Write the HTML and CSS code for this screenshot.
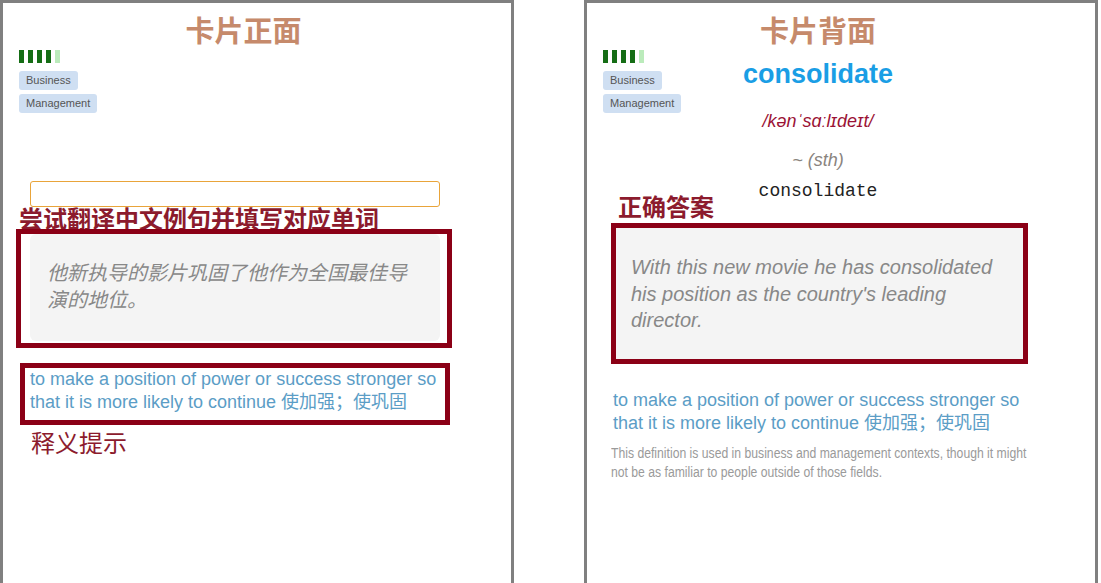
FILE: index.html
```html
<!DOCTYPE html>
<html lang="zh-CN">
<head>
<meta charset="utf-8">
<title>卡片</title>
<link rel="stylesheet" href="styles.css">
</head>
<body>
<div class="cards">
  <section class="card">
    <div class="head">
      <div class="main main-front">
        <h2 class="title">卡片正面</h2>
      </div>
      <div class="meta">
        <div class="bars"><span class="bar"></span><span class="bar"></span><span class="bar"></span><span class="bar"></span><span class="bar bar-off"></span></div>
        <span class="tag">Business</span>
        <span class="tag">Management</span>
      </div>
    </div>
    <input class="answer" type="text" aria-label="answer">
    <h3 class="mark mark-try">尝试翻译中文例句并填写对应单词</h3>
    <div class="hl hl-example">
      <p class="example example-zh">他新执导的影片巩固了他作为全国最佳导演的地位。</p>
    </div>
    <div class="hl hl-def">
      <p class="def">to make a position of power or success stronger so that it is more likely to continue 使加强；使巩固</p>
    </div>
    <div class="mark-hint">释义提示</div>
  </section>

  <section class="card">
    <div class="head">
      <div class="main main-back">
        <h2 class="title">卡片背面</h2>
        <div class="word">consolidate</div>
        <div class="phon">/kənˈsɑːlɪdeɪt/</div>
        <div class="usage">~ (sth)</div>
        <div class="mono">consolidate</div>
      </div>
      <div class="meta">
        <div class="bars"><span class="bar"></span><span class="bar"></span><span class="bar"></span><span class="bar"></span><span class="bar bar-off"></span></div>
        <span class="tag">Business</span>
        <span class="tag">Management</span>
      </div>
    </div>
    <h3 class="mark mark-answer">正确答案</h3>
    <div class="hl hl-answer">
      <p class="example example-en">With this new movie he has consolidated his position as the country's leading director.</p>
    </div>
    <p class="def def-back">to make a position of power or success stronger so that it is more likely to continue 使加强；使巩固</p>
    <p class="extra">This definition is used in business and management contexts, though it might not be as familiar to people outside of those fields.</p>
  </section>
</div>
</body>
</html>
```

FILE: styles.css
```css
html, body {
  margin: 0;
  padding: 0;
  background: #ffffff;
}

body {
  font-family: "Liberation Sans", "Noto Sans CJK SC", sans-serif;
  color: #333;
  overflow: hidden;
}

.cards {
  display: flex;
  gap: 70px;
  align-items: flex-start;
}

.card {
  box-sizing: border-box;
  width: 514px;
  min-height: 620px;
  border: 3px solid #808080;
  border-bottom: 0;
  padding: 0 16px;
}

.head {
  display: grid;
  align-items: start;
}

.head > * {
  grid-area: 1 / 1;
}

.main {
  justify-self: start;
  text-align: center;
}

.main-front { width: 449px; }
.main-back { width: 430px; }

.title {
  margin: 0;
  padding-top: 10px;
  font-family: "Noto Sans CJK SC", sans-serif;
  font-size: 29px;
  line-height: 32px;
  font-weight: 700;
  color: #c68a6b;
}

.meta {
  justify-self: start;
  margin-top: 47px;
  display: flex;
  flex-direction: column;
  align-items: flex-start;
  gap: 4px;
}

.bars {
  display: flex;
  gap: 4px;
  height: 13px;
  margin-bottom: 4px;
}

.bar {
  width: 5px;
  height: 13px;
  background: #156d15;
}

.bar-off {
  background: #bbebbb;
}

.tag {
  display: block;
  padding: 3px 7px;
  font-size: 11px;
  line-height: 13px;
  color: #555;
  background: #cfdff2;
  border-radius: 3px;
}

.word {
  margin-top: 13px;
  font-size: 27px;
  line-height: 32px;
  font-weight: 700;
  color: #1a9ee5;
}

.phon {
  margin-top: 20px;
  font-size: 18px;
  line-height: 22px;
  font-style: italic;
  color: #9b1235;
}

.usage {
  margin-top: 17px;
  font-size: 18px;
  line-height: 22px;
  font-style: italic;
  color: #8a847e;
}

.mono {
  margin-top: 9px;
  font-family: "Liberation Mono", monospace;
  font-size: 18px;
  line-height: 22px;
  color: #222;
}

.answer {
  display: block;
  box-sizing: border-box;
  width: 410px;
  height: 26px;
  margin: 68px 0 0 11px;
  padding: 0 6px;
  border: 1px solid #e9a43a;
  border-radius: 3px;
  background: #fff;
  outline: none;
}

.mark {
  margin: 0;
  font-family: "Noto Sans CJK SC", sans-serif;
  font-size: 24px;
  line-height: 24px;
  font-weight: 700;
  color: #8c1b2d;
}

.mark-try {
  margin-top: -1px;
}

.mark-answer {
  margin: -8px 0 0 15px;
}

.hl {
  position: relative;
  box-sizing: border-box;
  border: 5px solid #8b0016;
  background: #fff;
}

.hl-example {
  width: 436px;
  margin: -1px 0 0 -3px;
  padding: 0 7px 2px 9px;
}

.hl-answer {
  width: 417px;
  margin: 5px 0 0 8px;
}

.example {
  margin: 0;
  background: #f4f4f4;
  font-size: 20px;
  font-style: italic;
  color: #888;
}

.example-zh {
  padding: 26px 16px 27px 17px;
  line-height: 27px;
  border-radius: 6px;
}

.example-en {
  padding: 26px 14px 25px 15px;
  line-height: 26.5px;
}

.hl-def {
  width: 430px;
  margin: 15px 0 0 1px;
  padding: 0 0 6px 5px;
}

.def {
  margin: 0;
  font-size: 18px;
  line-height: 23px;
  color: #5b9dc6;
}

.mark-hint {
  margin: 5px 0 0 12px;
  font-family: "Noto Sans CJK SC", sans-serif;
  font-size: 24px;
  line-height: 24px;
  color: #8c1b2d;
}

.def-back {
  width: 430px;
  margin: 25px 0 0 10px;
}

.extra {
  width: 516px;
  margin: 9px 0 0 8px;
  font-size: 14.7px;
  line-height: 19.4px;
  color: #9a9a9a;
  transform: scaleX(0.83);
  transform-origin: 0 0;
}
```
